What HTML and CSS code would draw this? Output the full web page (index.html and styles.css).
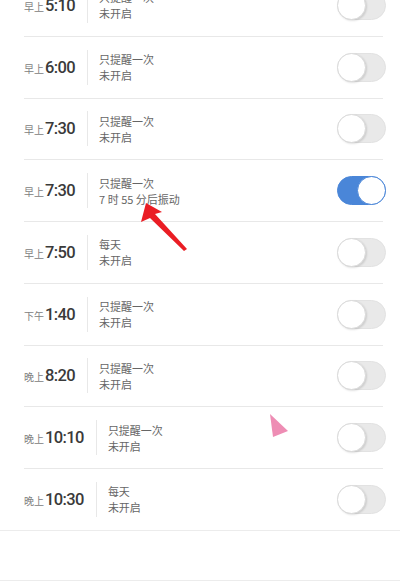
FILE: index.html
```html
<!DOCTYPE html>
<html lang="zh-CN">
<head>
  <meta charset="UTF-8">
  <meta name="viewport" content="width=device-width, initial-scale=1.0">
  <title>闹钟</title>
  <link rel="stylesheet" href="styles.css">
</head>
<body>
  <div class="page">
    <ul class="alarm-list">
      <li class="alarm">
        <div class="alarm-inner">
          <div class="time"><span class="period">早上</span><span class="clock">5:10</span></div>
          <div class="info"><div>只提醒一次</div><div>未开启</div></div>
          <div class="switch"></div>
        </div>
      </li>
      <li class="alarm">
        <div class="alarm-inner">
          <div class="time"><span class="period">早上</span><span class="clock">6:00</span></div>
          <div class="info"><div>只提醒一次</div><div>未开启</div></div>
          <div class="switch"></div>
        </div>
      </li>
      <li class="alarm">
        <div class="alarm-inner">
          <div class="time"><span class="period">早上</span><span class="clock">7:30</span></div>
          <div class="info"><div>只提醒一次</div><div>未开启</div></div>
          <div class="switch"></div>
        </div>
      </li>
      <li class="alarm">
        <div class="alarm-inner">
          <div class="time"><span class="period">早上</span><span class="clock">7:30</span></div>
          <div class="info"><div>只提醒一次</div><div>7 时 55 分后振动</div></div>
          <div class="switch on"></div>
        </div>
      </li>
      <li class="alarm">
        <div class="alarm-inner">
          <div class="time"><span class="period">早上</span><span class="clock">7:50</span></div>
          <div class="info"><div>每天</div><div>未开启</div></div>
          <div class="switch"></div>
        </div>
      </li>
      <li class="alarm">
        <div class="alarm-inner">
          <div class="time"><span class="period">下午</span><span class="clock">1:40</span></div>
          <div class="info"><div>只提醒一次</div><div>未开启</div></div>
          <div class="switch"></div>
        </div>
      </li>
      <li class="alarm">
        <div class="alarm-inner">
          <div class="time"><span class="period">晚上</span><span class="clock">8:20</span></div>
          <div class="info"><div>只提醒一次</div><div>未开启</div></div>
          <div class="switch"></div>
        </div>
      </li>
      <li class="alarm">
        <div class="alarm-inner">
          <div class="time"><span class="period">晚上</span><span class="clock">10:10</span></div>
          <div class="info"><div>只提醒一次</div><div>未开启</div></div>
          <div class="switch"></div>
        </div>
      </li>
      <li class="alarm">
        <div class="alarm-inner">
          <div class="time"><span class="period">晚上</span><span class="clock">10:30</span></div>
          <div class="info"><div>每天</div><div>未开启</div></div>
          <div class="switch"></div>
        </div>
      </li>
    </ul>
    <div class="bottom-space"></div>

    <!-- 标注：红色箭头和鼠标指针 -->
    <svg class="overlay" width="400" height="584" viewBox="0 0 400 584">
      <polygon points="146,203 141,222 150,218 184,251 187,249 155,214 162,212" fill="#ea1d24"/>
      <polygon points="270,414 273,437 288,431" fill="#ee8db4"/>
    </svg>
  </div>
</body>
</html>
```

FILE: styles.css
```css
body {
  margin: 0;
  background-color: #fff;
  font-family: "Noto Sans CJK SC", "Noto Sans", sans-serif;
}
.page {
  position: relative;
  width: 400px;
  height: 584px;
  overflow: hidden;
  background-color: #fff;
}
.alarm-list {
  list-style: none;
  margin: -25px 0 0;
  padding: 0;
  border-bottom: 1px solid #ececec;
}
.alarm {
  padding-left: 24px;
}
.alarm-inner {
  display: flex;
  align-items: center;
  height: 60.75px;
  margin-right: 17px;
  border-bottom: 1px solid #e8e8e8;
}
.alarm:last-child .alarm-inner {
  border-bottom: none;
}
.time {
  display: flex;
  align-items: baseline;
  padding-right: 12px;
  border-right: 1px solid #e8e8e8;
  height: 35px;
  line-height: 35px;
}
.period {
  font-size: 10px;
  color: #808080;
  margin-right: 1px;
}
.clock {
  font-family: Roboto, "Liberation Sans", sans-serif;
  font-size: 16.5px;
  font-weight: 500;
  letter-spacing: -0.6px;
  color: #3a3a3a;
}
.info {
  flex: 1;
  padding-left: 11px;
  font-size: 11px;
  line-height: 16px;
  color: #666;
}
.switch {
  position: relative;
  width: 47px;
  height: 27px;
  margin-right: -3px;
  border: 1px solid #e2e2e2;
  border-radius: 15px;
  background-color: #e9e9e9;
}
.switch::after {
  content: "";
  position: absolute;
  top: -1px;
  left: -1px;
  width: 27px;
  height: 27px;
  border-radius: 50%;
  background-color: #fff;
  border: 1px solid #dadada;
  box-shadow: 1px 1px 2px rgba(0, 0, 0, 0.12);
}
.switch.on {
  background-color: #4a86d8;
  border-color: #4a86d8;
}
.switch.on::after {
  left: auto;
  right: -1px;
  border-color: #4a86d8;
  box-shadow: none;
}
.bottom-space {
  height: 49px;
  border-bottom: 1px solid #ececec;
}
.overlay {
  position: absolute;
  top: 0;
  left: 0;
  pointer-events: none;
}
```
